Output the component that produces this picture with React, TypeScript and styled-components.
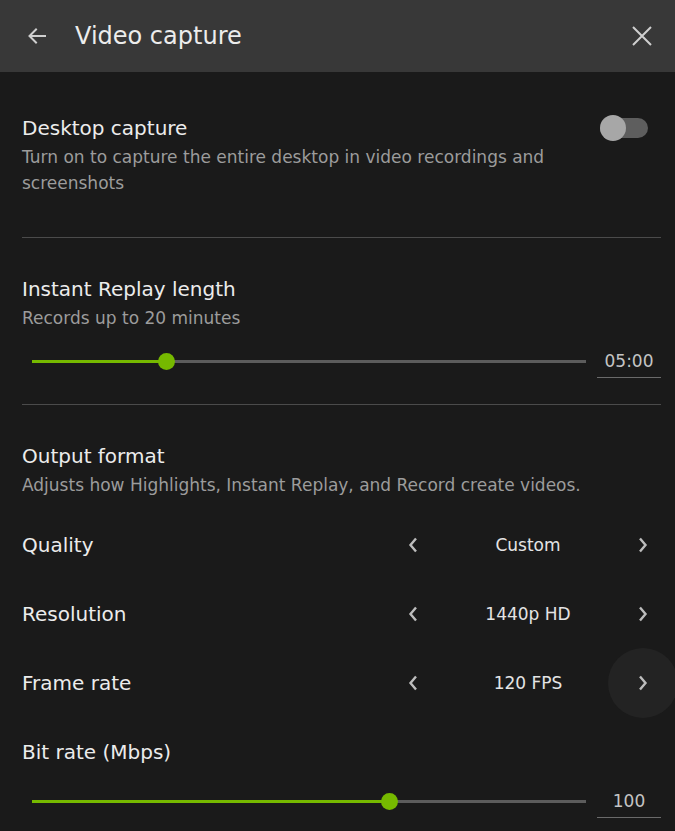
import React from 'react';
import styled, { createGlobalStyle } from 'styled-components';

const GlobalStyle = createGlobalStyle`
    html, body {
        margin: 0;
        padding: 0;
        background: #1a1a1a;
    }
    body {
        font-family: "DejaVu Sans", Roboto, sans-serif;
        color: #ebebeb;
    }
`;

const Panel = styled.div`
    width: 675px;
    height: 831px;
    overflow: hidden;
    background: #1a1a1a;
`;

const Header = styled.div`
    height: 72px;
    background: #383838;
    display: flex;
    align-items: center;
    padding: 0 20px 0 24px;
    box-sizing: border-box;
`;

const HeaderTitle = styled.div`
    flex: 1;
    margin-left: 25px;
    font-size: 24px;
    color: #ececec;
`;

const IconButton = styled.div`
    width: 26px;
    height: 26px;
    display: flex;
    align-items: center;
    justify-content: center;
    color: #cfcfcf;
`;

const Content = styled.div`
    padding: 0 14px 0 22px;
`;

const Section = styled.div<{ top: number; bottom: number; divider?: boolean }>`
    padding-top: ${p => p.top}px;
    padding-bottom: ${p => p.bottom}px;
    border-bottom: ${p => (p.divider ? '1px solid #4b4b4b' : 'none')};
`;

const TitleRow = styled.div`
    display: flex;
    justify-content: space-between;
    align-items: flex-start;
`;

const Title = styled.div<{ gap?: number }>`
    margin-top: ${p => p.gap ?? 0}px;
    font-size: 20px;
    line-height: 26px;
    color: #ececec;
`;

const Desc = styled.div`
    margin-top: 3px;
    font-size: 17px;
    line-height: 26px;
    color: #9c9c9c;
    max-width: 560px;
`;

const Toggle = styled.div`
    position: relative;
    width: 48px;
    height: 20px;
    margin-top: 3px;
    margin-right: 13px;
    border-radius: 10px;
    background: #5e5e5e;
    &::after {
        content: '';
        position: absolute;
        left: 0;
        top: -3px;
        width: 26px;
        height: 26px;
        border-radius: 50%;
        background: #a7a7a7;
    }
`;

const SliderRow = styled.div<{ gap: number }>`
    display: flex;
    align-items: center;
    height: 34px;
    margin-top: ${p => p.gap}px;
`;

const Track = styled.div`
    position: relative;
    flex: 1;
    height: 3px;
    margin-left: 10px;
    background: #5c5c5c;
`;

const Fill = styled.div`
    position: absolute;
    left: 0;
    top: 0;
    height: 3px;
    background: #76b900;
`;

const Thumb = styled.div`
    position: absolute;
    top: -7px;
    width: 17px;
    height: 17px;
    margin-left: -8px;
    border-radius: 50%;
    background: #76b900;
`;

const ValueBox = styled.div`
    width: 64px;
    height: 34px;
    margin-left: 11px;
    box-sizing: border-box;
    border-bottom: 1px solid #6a6a6a;
    display: flex;
    align-items: center;
    justify-content: center;
    font-size: 17px;
    color: #c4c4c4;
`;

const OptionList = styled.div`
    margin-top: 12px;
`;

const OptionRow = styled.div`
    display: flex;
    align-items: center;
    height: 69px;
`;

const OptionLabel = styled.div`
    flex: 1;
    font-size: 20px;
    color: #ececec;
`;

const Chevron = styled.div<{ hover?: boolean }>`
    position: relative;
    width: 36px;
    height: 36px;
    display: flex;
    align-items: center;
    justify-content: center;
    color: #bdbdbd;
    &::before {
        content: '';
        display: ${p => (p.hover ? 'block' : 'none')};
        position: absolute;
        left: -17px;
        top: -17px;
        width: 70px;
        height: 70px;
        border-radius: 50%;
        background: #232323;
    }
    svg {
        position: relative;
    }
`;

const OptionValue = styled.div`
    width: 194px;
    text-align: center;
    font-size: 17px;
    color: #e4e4e4;
`;

const ArrowLeft = () => (
    <svg width="24" height="24" viewBox="0 0 24 24" fill="none" stroke="currentColor" strokeWidth="2" strokeLinecap="square">
        <path d="M20 12H5M11 5.5L4.5 12l6.5 6.5" />
    </svg>
);

const CloseIcon = () => (
    <svg width="20" height="20" viewBox="0 0 20 20" fill="none" stroke="currentColor" strokeWidth="2">
        <path d="M1 1l18 18M19 1L1 19" />
    </svg>
);

const ChevLeft = () => (
    <svg width="12" height="16" viewBox="0 0 12 16" fill="none" stroke="currentColor" strokeWidth="2.4">
        <path d="M9 1.5L3.5 8 9 14.5" />
    </svg>
);

const ChevRight = () => (
    <svg width="12" height="16" viewBox="0 0 12 16" fill="none" stroke="currentColor" strokeWidth="2.4">
        <path d="M3 1.5L8.5 8 3 14.5" />
    </svg>
);

const Slider: React.FC<{ percent: number; value: string; gap: number }> = ({ percent, value, gap }) => (
    <SliderRow gap={gap}>
        <Track>
            <Fill style={{ width: `${percent}%` }} />
            <Thumb style={{ left: `${percent}%` }} />
        </Track>
        <ValueBox>{value}</ValueBox>
    </SliderRow>
);

const Option: React.FC<{ label: string; value: string; hover?: boolean }> = ({ label, value, hover }) => (
    <OptionRow>
        <OptionLabel>{label}</OptionLabel>
        <Chevron><ChevLeft /></Chevron>
        <OptionValue>{value}</OptionValue>
        <Chevron hover={hover}><ChevRight /></Chevron>
    </OptionRow>
);

const App: React.FC = () => (
    <>
        <GlobalStyle />
        <Panel>
            <Header>
                <IconButton><ArrowLeft /></IconButton>
                <HeaderTitle>Video capture</HeaderTitle>
                <IconButton><CloseIcon /></IconButton>
            </Header>
            <Content>
                <Section top={43} bottom={41} divider>
                    <TitleRow>
                        <Title>Desktop capture</Title>
                        <Toggle />
                    </TitleRow>
                    <Desc>Turn on to capture the entire desktop in video recordings and screenshots</Desc>
                </Section>
                <Section top={38} bottom={26} divider>
                    <Title>Instant Replay length</Title>
                    <Desc>Records up to 20 minutes</Desc>
                    <Slider percent={24.2} value="05:00" gap={13} />
                </Section>
                <Section top={38} bottom={0}>
                    <Title>Output format</Title>
                    <Desc>Adjusts how Highlights, Instant Replay, and Record create videos.</Desc>
                    <OptionList>
                        <Option label="Quality" value="Custom" />
                        <Option label="Resolution" value="1440p HD" />
                        <Option label="Frame rate" value="120 FPS" hover />
                    </OptionList>
                    <Title gap={22}>Bit rate (Mbps)</Title>
                    <Slider percent={64.4} value="100" gap={19} />
                </Section>
            </Content>
        </Panel>
    </>
);

export default App;
